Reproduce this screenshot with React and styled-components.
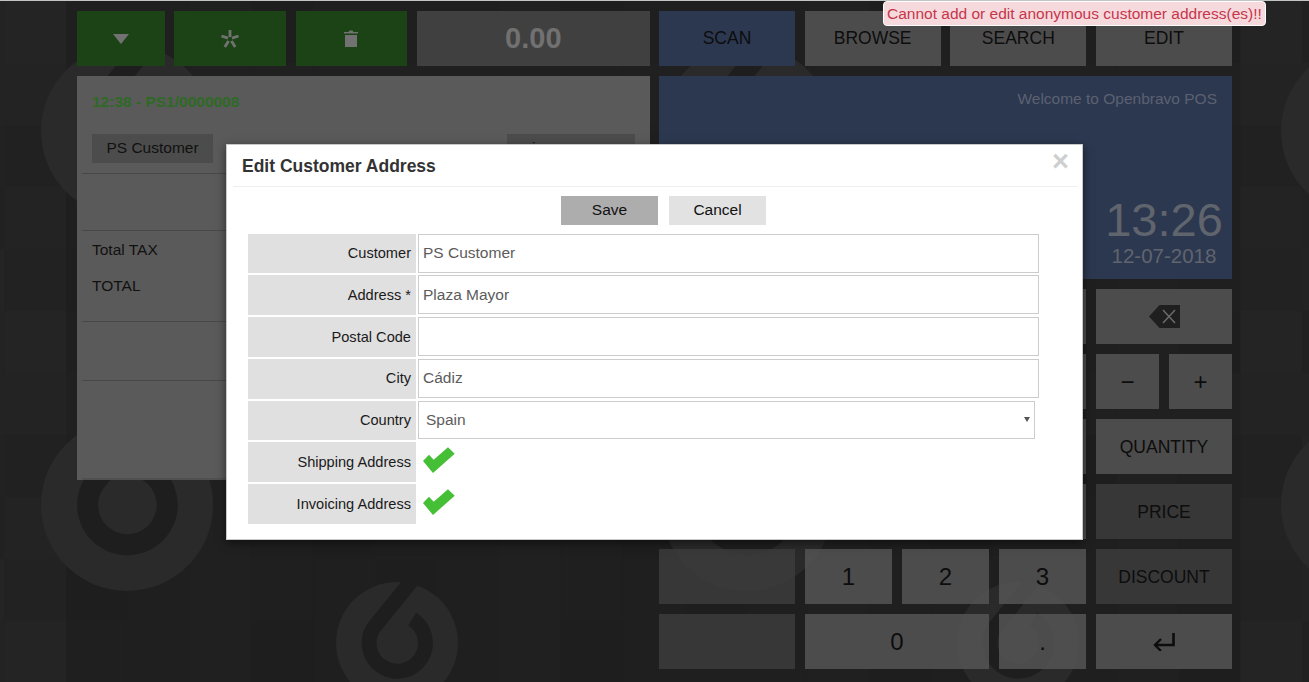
import React from 'react'
import styled, { createGlobalStyle } from 'styled-components'

const GlobalStyle = createGlobalStyle`
    html, body {
        margin: 0;
        height: 100%;
        overflow: hidden;
        background: #1f1f1f;
    }
    * {
        box-sizing: border-box;
    }
`

// shades of the faint tiles behind the terminal, looked up per column/row
const tileShade = (col, row) => {
    const n = (col * 7 + row * 13 + col * row * 3) % 5
    const edge = col < 2 || col >= 21
    return edge
        ? ['#232323', '#222222', '#242424', '#232323', '#212121'][n]
        : ['#1e1e1e', '#1f1f1f', '#1f1f1f', '#202020', '#1f1f1f'][n]
}

// openbravo drop mark, drawn at r=184 and scaled
const Logo = ({ x, y, r }) => (
    <g transform={`translate(${x} ${y}) scale(${r / 184})`}>
        <circle r="184" fill="#2a2a2a" />
        <path d="M48 -192 L-70 -47 A85 85 0 1 0 46 -72" fill="none" stroke="#1e1e1e" strokeWidth="45" />
    </g>
)

const Backdrop = () => {
    const tiles = []
    for (let col = 0; col < 23; col++) {
        for (let row = 0; row < 12; row++) {
            tiles.push(
                <rect key={`${col}-${row}`} x={col * 61.8 - 57.6} y={row * 62 + 1} width="62" height="62" fill={tileShade(col, row)} />
            )
        }
    }
    return (
        <BackdropSvg width="1309" height="682" viewBox="0 0 1309 682">
            {tiles}
            <Logo x={127} y={131} r={86} />
            <Logo x={127} y={505} r={86} />
            <Logo x={747} y={131} r={86} />
            <Logo x={747} y={505} r={86} />
            <Logo x={1367} y={131} r={86} />
            <Logo x={1367} y={505} r={86} />
            <Logo x={397} y={643} r={61} />
            <Logo x={1018} y={643} r={61} />
        </BackdropSvg>
    )
}

const CheckMark = () => (
    <svg width="32" height="26" viewBox="0 0 32 26">
        <path d="M0 14L6 7.7L10.7 12.7L25 0.3L31.7 6.7L10 26Z" fill="#45bf35" />
    </svg>
)

const Page = () => (
    <Screen>
        <GlobalStyle />
        <Backdrop />
        <Terminal>
            <Column>
                <Toolbar>
                    <ActionButton $width={87.67}>
                        <svg width="16" height="10" viewBox="0 0 16 10"><path d="M0 0H16L8 10Z" fill="#727272" /></svg>
                    </ActionButton>
                    <ActionButton $width={112}>
                        <svg width="18" height="18" viewBox="0 0 18 18" stroke="#727272" strokeWidth="2.8" fill="none">
                            <path d="M9 0V7M0.5 6L7 8.2M17.5 6L11 8.2M3.8 17L7.6 11M14.2 17L10.4 11" />
                        </svg>
                    </ActionButton>
                    <ActionButton $width={111}>
                        <svg width="14" height="17" viewBox="0 0 14 17" fill="#727272">
                            <path d="M0 2H4.5L5.5 0.5H8.5L9.5 2H14V3.5H0ZM1 5H13V17H1Z" />
                        </svg>
                    </ActionButton>
                    <TotalDisplay>0.00</TotalDisplay>
                </Toolbar>
                <ReceiptPanel>
                    <ReceiptTitle>12:38 - PS1/0000008</ReceiptTitle>
                    <CustomerRow>
                        <ChipButton $width={121}>PS Customer</ChipButton>
                        <ChipButton $width={128} $indent={25}>i</ChipButton>
                    </CustomerRow>
                    <ReceiptLine $height={57} $gap={10} />
                    <TotalsBlock>
                        <TotalRow>Total TAX</TotalRow>
                        <TotalRow>TOTAL</TotalRow>
                    </TotalsBlock>
                    <ReceiptLine $height={59} />
                    <ReceiptFoot />
                </ReceiptPanel>
            </Column>
            <Column>
                <ModeTabs>
                    <Key $tone="blue">SCAN</Key>
                    <Key>BROWSE</Key>
                    <Key>SEARCH</Key>
                    <Key>EDIT</Key>
                </ModeTabs>
                <InfoPanel>
                    <Welcome>Welcome to Openbravo POS</Welcome>
                    <ClockBlock>
                        <ClockTime>13:26</ClockTime>
                        <ClockDate>12-07-2018</ClockDate>
                    </ClockBlock>
                </InfoPanel>
                <Keypad>
                    <Key />
                    <Key />
                    <Key />
                    <Key />
                    <Key>
                        <svg width="31" height="23" viewBox="0 0 31 23">
                            <path d="M0 11.5L10.5 0H31V23H10.5Z" fill="#1f1f1f" />
                            <path d="M14 5L26 18M26 5L14 18" stroke="#6e6e6e" strokeWidth="1.4" />
                        </svg>
                    </Key>
                    <Key />
                    <Key />
                    <Key />
                    <Key />
                    <SplitKeys>
                        <Key $digit>−</Key>
                        <Key $digit>+</Key>
                    </SplitKeys>
                    <Key />
                    <Key $digit>7</Key>
                    <Key $digit>8</Key>
                    <Key $digit>9</Key>
                    <Key $low>QUANTITY</Key>
                    <Key />
                    <Key $digit>4</Key>
                    <Key $digit>5</Key>
                    <Key $digit>6</Key>
                    <Key $tone="dim" $low>PRICE</Key>
                    <Key $tone="dim" />
                    <Key $digit>1</Key>
                    <Key $digit>2</Key>
                    <Key $digit>3</Key>
                    <Key $tone="dim" $low>DISCOUNT</Key>
                    <Key $tone="dim" />
                    <Key $digit $span={2}>0</Key>
                    <Key $digit>.</Key>
                    <Key>
                        <svg width="22" height="18" viewBox="0 0 22 18" fill="none" stroke="#0d0d0d" strokeWidth="2.6">
                            <path d="M20.5 0V12H3" />
                            <path d="M8 6L2 12L8 18" strokeWidth="2.4" />
                        </svg>
                    </Key>
                </Keypad>
            </Column>
        </Terminal>

        <Toast>Cannot add or edit anonymous customer address(es)!!</Toast>

        <Modal>
            <ModalHeader>
                <ModalTitle>Edit Customer Address</ModalTitle>
                <CloseMark>×</CloseMark>
            </ModalHeader>
            <ModalActions>
                <DialogButton $primary>Save</DialogButton>
                <DialogButton>Cancel</DialogButton>
            </ModalActions>
            <FormGrid>
                <FieldLabel $lift>Customer</FieldLabel>
                <TextField $lift readOnly value="PS Customer" />
                <FieldLabel>Address *</FieldLabel>
                <TextField readOnly value="Plaza Mayor" />
                <FieldLabel>Postal Code</FieldLabel>
                <TextField readOnly value="" />
                <FieldLabel $lift>City</FieldLabel>
                <TextField $lift readOnly value="Cádiz" />
                <FieldLabel $lift>Country</FieldLabel>
                <SelectWrap>
                    <CountrySelect defaultValue="Spain">
                        <option>Spain</option>
                    </CountrySelect>
                </SelectWrap>
                <FieldLabel>Shipping Address</FieldLabel>
                <CheckCell><CheckMark /></CheckCell>
                <FieldLabel>Invoicing Address</FieldLabel>
                <CheckCell><CheckMark /></CheckCell>
            </FormGrid>
        </Modal>
    </Screen>
)

const Screen = styled.div`
    position: relative;
    width: 1309px;
    height: 682px;
    overflow: hidden;
    border-top: 1px solid #c4c4c4;
    padding-top: 10px;
    font-family: "Liberation Sans", Arial, sans-serif;
`
const BackdropSvg = styled.svg`
    position: absolute;
    top: -1px;
    left: 0;
`
const Terminal = styled.div`
    position: relative;
    width: 1155px;
    margin: 0 auto;
    display: grid;
    grid-template-columns: 573px 573px;
    column-gap: 9px;
`
const Column = styled.div`
    display: flex;
    flex-direction: column;
    gap: 10px;
`
const Toolbar = styled.div`
    display: flex;
    height: 55px;
    gap: 9.67px;
`
const ActionButton = styled.div`
    width: ${p => p.$width}px;
    background: #1b4315;
    display: flex;
    align-items: center;
    justify-content: center;
`
const TotalDisplay = styled.div`
    flex: 1;
    background: #404040;
    color: #717171;
    font-size: 29px;
    font-weight: bold;
    display: flex;
    align-items: center;
    justify-content: center;
`
const ReceiptPanel = styled.div`
    height: 404px;
    background: #5a5a5a;
    padding-top: 17px;
    display: flex;
    flex-direction: column;
`
const ReceiptTitle = styled.div`
    margin-left: 15px;
    color: #2e6a24;
    font-size: 15.5px;
    font-weight: bold;
    line-height: 18px;
`
const CustomerRow = styled.div`
    display: flex;
    justify-content: space-between;
    margin: 23px 15px 0;
`
const ChipButton = styled.div`
    width: ${p => p.$width}px;
    height: 29px;
    padding-left: ${p => p.$indent || 0}px;
    background: #4c4c4c;
    color: #111;
    font-size: 15.5px;
    line-height: 28px;
    text-align: ${p => (p.$indent ? 'left' : 'center')};
`
const ReceiptLine = styled.div`
    height: ${p => p.$height}px;
    margin: ${p => p.$gap || 0}px 5px 0;
    border-top: 1px solid #484848;
`
const ReceiptFoot = styled.div`
    flex: 1;
    margin: 0 0 0 5px;
    border-top: 1px solid #484848;
    border-bottom: 2px solid #505050;
`
const TotalsBlock = styled.div`
    height: 91px;
    margin: 0 5px;
    padding: 10px 10px 0;
    border-top: 1px solid #484848;
`
const TotalRow = styled.div`
    height: 36px;
    color: #111;
    font-size: 15.5px;
    line-height: 18px;
`
const ModeTabs = styled.div`
    display: grid;
    grid-template-columns: repeat(4, 136px);
    grid-auto-rows: 55px;
    column-gap: 9.67px;
`
const Key = styled.div`
    grid-column: span ${p => p.$span || 1};
    height: 55px;
    padding-top: ${p => (p.$low ? 2 : 0)}px;
    display: flex;
    align-items: center;
    justify-content: center;
    color: #0d0d0d;
    font-size: ${p => (p.$digit ? '24px' : '17.5px')};
    background: ${p => (p.$tone === 'blue' ? '#2c3850' : p.$tone === 'dim' ? 'rgba(60,60,60,0.85)' : 'rgba(85,85,85,0.85)')};
`
const InfoPanel = styled.div`
    height: 203px;
    background: #2c3850;
    display: flex;
    flex-direction: column;
    justify-content: space-between;
    align-items: flex-end;
    padding: 14px 0 11px;
`
const Welcome = styled.div`
    margin-right: 15px;
    color: #5b6170;
    font-size: 15.5px;
    line-height: 17px;
`
const ClockBlock = styled.div`
    width: 136px;
    text-align: center;
    color: #60646d;
`
const ClockTime = styled.div`
    font-size: 47px;
    line-height: 55px;
`
const ClockDate = styled.div`
    margin-top: -3px;
    font-size: 20.5px;
    line-height: 24px;
`
const Keypad = styled.div`
    display: grid;
    grid-template-columns: 136px 87px 87px 87px 136px;
    grid-auto-rows: 55px;
    gap: 10px;
`
const SplitKeys = styled.div`
    display: grid;
    grid-template-columns: 63px 63px;
    gap: 10px;
`
const Toast = styled.div`
    position: absolute;
    top: 0;
    left: 883px;
    width: 383px;
    height: 25px;
    padding-left: 3px;
    background: #f5d9dd;
    border: 1px solid #fff;
    border-radius: 4px;
    color: #c7354a;
    font-size: 15.5px;
    line-height: 23px;
    white-space: nowrap;
`
const Modal = styled.div`
    position: absolute;
    top: 143px;
    left: 226px;
    width: 857px;
    height: 396px;
    background: #fff;
    border: 1px solid #c9c9c9;
    box-shadow: 0 3px 9px rgba(0, 0, 0, 0.5);
`
const ModalHeader = styled.div`
    height: 42px;
    margin: 0 5px 0 6px;
    padding-left: 9px;
    border-bottom: 1px solid #eee;
    display: flex;
    justify-content: space-between;
    align-items: flex-start;
`
const ModalTitle = styled.div`
    margin-top: 11px;
    color: #333;
    font-size: 17.5px;
    font-weight: bold;
    line-height: 21px;
`
const CloseMark = styled.div`
    margin: 1px 8px 0 0;
    color: #cfcfcf;
    font-size: 29px;
    font-weight: bold;
    line-height: 30px;
`
const ModalActions = styled.div`
    display: flex;
    justify-content: center;
    gap: 11px;
    margin: 9px 0 9px;
    padding-left: 18px;
`
const DialogButton = styled.div`
    width: 97px;
    height: 29px;
    background: ${p => (p.$primary ? '#adadad' : '#e2e2e2')};
    color: #111;
    font-size: 15.5px;
    line-height: 28px;
    text-align: center;
`
const FormGrid = styled.div`
    display: grid;
    grid-template-columns: 168px 621px;
    grid-template-rows: 39px 40px 40px 40px 39px 40px 40px;
    gap: 2px;
    margin-left: 21px;
`
const FieldLabel = styled.div`
    background: #e0e0e0;
    color: #1a1a1a;
    font-size: 14.6px;
    display: flex;
    align-items: center;
    justify-content: flex-end;
    padding: 0 5px ${p => (p.$lift ? 2 : 0)}px 0;
`
const TextField = styled.input`
    height: 39px;
    padding: 0 4px ${p => (p.$lift ? 2 : 0)}px;
    border: 1px solid #ccc;
    background: #fff;
    color: #5c5c5c;
    font-family: inherit;
    font-size: 15.5px;
    outline: none;
`
const SelectWrap = styled.div`
    position: relative;
    width: 617px;
    height: 38px;
    &::after {
        content: '';
        position: absolute;
        top: 16px;
        right: 5px;
        border-top: 5px solid #555;
        border-left: 3px solid transparent;
        border-right: 3px solid transparent;
    }
`
const CountrySelect = styled.select`
    appearance: none;
    width: 100%;
    height: 100%;
    padding: 0 0 2px 7px;
    border: 1px solid #ccc;
    background: #fff;
    color: #5c5c5c;
    font-family: inherit;
    font-size: 15.5px;
    border-radius: 0;
`
const CheckCell = styled.div`
    padding: 5px 0 0 5px;
`

export default Page
